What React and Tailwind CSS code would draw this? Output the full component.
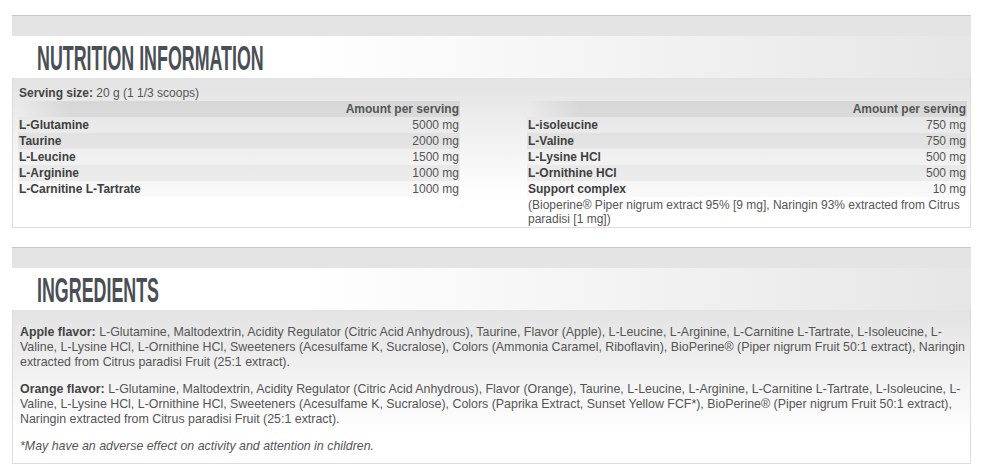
import React from "react";

const leftRows = [
  ["L-Glutamine", "5000 mg"],
  ["Taurine", "2000 mg"],
  ["L-Leucine", "1500 mg"],
  ["L-Arginine", "1000 mg"],
  ["L-Carnitine L-Tartrate", "1000 mg"],
];
const rightRows = [
  ["L-isoleucine", "750 mg"],
  ["L-Valine", "750 mg"],
  ["L-Lysine HCl", "500 mg"],
  ["L-Ornithine HCl", "500 mg"],
  ["Support complex", "10 mg"],
];

function Table({ rows, extra }) {
  return (
    <div className="flex flex-col">
      <div className="flex h-4 items-center justify-end bg-gradient-to-r from-[rgba(0,0,0,0)] from-0% to-[rgba(0,0,0,0.08)] to-[12%] pr-[1px] font-bold text-[#555]">
        Amount per serving
      </div>
      {rows.map(([n, v], i) => (
        <div
          key={n}
          className={
            "flex h-4 items-center justify-between pl-[1px] pr-[1px] " +
            (i % 2 === 1 ? "bg-[rgba(0,0,0,0.06)]" : "bg-[rgba(0,0,0,0.02)]")
          }
        >
          <span className="font-bold text-[#3f3f3f]">{n}</span>
          <span className="text-[#555]">{v}</span>
        </div>
      ))}
      {extra && <div className="pl-[1px] leading-[14px] text-[#555] pt-[1px]">{extra}</div>}
    </div>
  );
}

function Header({ title }) {
  return (
    <>
      <div className="h-[21px] border-t border-[#c8c8c8] bg-[#e4e4e4]" />
      <div className="flex h-[42px] items-center bg-gradient-to-r from-white from-30% to-[#e6e6e6] pl-[25px]">
        <h2
          className="origin-left scale-x-[0.51] whitespace-nowrap text-[35px] font-bold leading-none text-[#4a4e55]"
          style={{ fontFamily: '"Liberation Sans Narrow", "Liberation Sans", sans-serif' }}
        >
          {title}
        </h2>
      </div>
    </>
  );
}

export default function App() {
  return (
    <div
      className="h-[472px] w-[986px] bg-white pl-[12px] pt-[15px] text-[12px] text-[#555]"
      style={{ fontFamily: '"Liberation Sans", Arial, sans-serif' }}
    >
      <div className="w-[959px]">
        <Header title="NUTRITION INFORMATION" />
        <div className="h-[150px] border-x border-b border-[#dcdcdc] bg-gradient-to-b from-[#e3e3e3] to-white to-80% px-[5px] pt-[7px]">
          <div className="h-4 leading-4 pl-[1px]">
            <span className="font-bold text-[#444]">Serving size:</span> 20 g (1 1/3 scoops)
          </div>
          <div className="grid grid-cols-[442px_440px] gap-x-[67px]">
            <Table rows={leftRows} />
            <Table
              rows={rightRows}
              extra="(Bioperine® Piper nigrum extract 95% [9 mg], Naringin 93% extracted from Citrus paradisi [1 mg])"
            />
          </div>
        </div>
      </div>

      <div className="mt-[19px] w-[959px]">
        <Header title="INGREDIENTS" />
        <div className="h-[154px] border-x border-b border-[#dcdcdc] bg-gradient-to-b from-[#e3e3e3] to-white to-80% pl-[7px] pr-[5px] pt-[15px] text-[12.4px] leading-[15px]">
          <p>
            <span className="font-bold text-[#444]">Apple flavor:</span> L-Glutamine, Maltodextrin, Acidity Regulator (Citric Acid Anhydrous), Taurine, Flavor (Apple), L-Leucine, L-Arginine, L-Carnitine L-Tartrate, L-Isoleucine, L-Valine, L-Lysine HCl, L-Ornithine HCl, Sweeteners (Acesulfame K, Sucralose), Colors (Ammonia Caramel, Riboflavin), BioPerine® (Piper nigrum Fruit 50:1 extract), Naringin extracted from Citrus paradisi Fruit (25:1 extract).
          </p>
          <p className="mt-[12px]">
            <span className="font-bold text-[#444]">Orange flavor:</span> L-Glutamine, Maltodextrin, Acidity Regulator (Citric Acid Anhydrous), Flavor (Orange), Taurine, L-Leucine, L-Arginine, L-Carnitine L-Tartrate, L-Isoleucine, L-Valine, L-Lysine HCl, L-Ornithine HCl, Sweeteners (Acesulfame K, Sucralose), Colors (Paprika Extract, Sunset Yellow FCF*), BioPerine® (Piper nigrum Fruit 50:1 extract), Naringin extracted from Citrus paradisi Fruit (25:1 extract).
          </p>
          <p className="mt-[12px] italic">*May have an adverse effect on activity and attention in children.</p>
        </div>
      </div>
    </div>
  );
}
